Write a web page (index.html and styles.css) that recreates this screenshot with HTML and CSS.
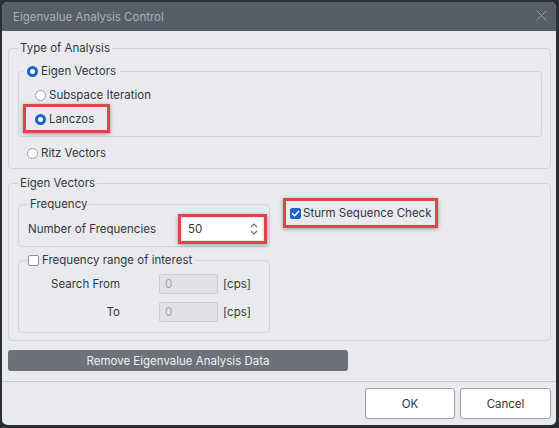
FILE: index.html
```html
<!DOCTYPE html>
<html>
<head>
<meta charset="utf-8">
<link rel="stylesheet" href="styles.css">
</head>
<body>
<div class="dialog">
  <div class="titlebar">
    <span class="title">Eigenvalue Analysis Control</span>
    <svg class="close" width="11" height="11" viewBox="0 0 11 11"><path d="M0.5 0.5 L10.5 10.5 M10.5 0.5 L0.5 10.5" stroke="#989da4" stroke-width="1" fill="none"/></svg>
  </div>
  <div class="content">
    <fieldset class="group type-group">
      <legend>Type of Analysis</legend>
      <fieldset class="group sub-group">
        <legend class="opt"><span class="radio on"></span>Eigen Vectors</legend>
        <div class="opt sub-opt"><span class="radio"></span>Subspace Iteration</div>
        <div class="hl hl-lanczos"><div class="opt"><span class="radio on"></span>Lanczos</div></div>
      </fieldset>
      <div class="opt ritz"><span class="radio"></span>Ritz Vectors</div>
    </fieldset>
    <fieldset class="group eigen-group">
      <legend>Eigen Vectors</legend>
      <div class="eigen-cols">
        <div class="left-col">
          <fieldset class="group freq-group">
            <legend>Frequency</legend>
            <div class="freq-row">
              <span class="freq-label">Number of Frequencies</span>
              <div class="hl hl-spin">
                <div class="spin"><span>50</span>
                  <svg class="arrows" width="8" height="14" viewBox="0 0 8 14"><path d="M1 5 L4 2 L7 5 M1 9 L4 12 L7 9" stroke="#6b6f75" stroke-width="1.1" fill="none"/></svg>
                </div>
              </div>
            </div>
          </fieldset>
          <fieldset class="group range-group">
            <legend class="opt chk-legend"><span class="check"></span>Frequency range of interest</legend>
            <div class="range-grid">
              <span class="rlabel">Search From</span><span class="dinput">0</span><span class="unit">[cps]</span>
              <span class="rlabel">To</span><span class="dinput">0</span><span class="unit">[cps]</span>
            </div>
          </fieldset>
        </div>
        <div class="hl hl-sturm">
          <div class="opt"><span class="check on"><svg width="11" height="11" viewBox="0 0 11 11"><path d="M2.5 5.6 L4.6 7.7 L8.6 3.4" stroke="#fff" stroke-width="1.5" fill="none" stroke-linecap="round" stroke-linejoin="round"/></svg></span>Sturm Sequence Check</div>
        </div>
      </div>
    </fieldset>
    <button class="remove">Remove Eigenvalue Analysis Data</button>
  </div>
  <div class="footer">
    <button class="btn">OK</button>
    <button class="btn btn-cancel">Cancel</button>
  </div>
</div>
</body>
</html>
```
FILE: styles.css
```css
* { box-sizing: border-box; }
html, body { margin: 0; padding: 0; background: #2a2f34; }
body {
  font-family: "Inter", "Noto Sans", sans-serif;
  font-size: 11.5px;
  color: #33373c;
}
.dialog {
  width: 559px;
  height: 428px;
  background: #e9eaee;
  border: 2px solid #2a2f34;
  border-right-width: 3px;
  border-bottom-width: 3px;
  border-radius: 8px;
  overflow: hidden;
  display: flex;
  flex-direction: column;
}
.titlebar {
  height: 29px;
  flex: none;
  background: #575e67;
  display: flex;
  align-items: center;
  justify-content: space-between;
  padding: 0 9px 0 11px;
}
.title {
  color: #aab0b7;
  font-size: 11.5px;
}
.close { display: block; margin-top: -2px; }
.content {
  padding: 9px 5px 10px 6px;
  flex: none;
}
.group {
  margin: 0;
  min-width: 0;
  border: 1px solid #d2d4d8;
  border-radius: 4px;
}
.group > legend {
  padding: 0 2px;
  height: 16px;
  line-height: 16px;
}
.opt {
  display: flex;
  align-items: center;
  gap: 3px;
  height: 20px;
}
legend.opt { height: 16px; }
.radio {
  width: 11px;
  height: 11px;
  border-radius: 50%;
  background: #fff;
  border: 1px solid #9b9ea3;
  flex: none;
}
.radio.on {
  border: 3px solid #1c63c6;
}
.check {
  width: 11px;
  height: 11px;
  border-radius: 2px;
  background: #fff;
  border: 1px solid #8d9096;
  flex: none;
  display: flex;
}
.check.on {
  background: #1e64c4;
  border-color: #1e64c4;
}
.check.on svg { margin: -1px; }
.hl {
  border: 3px solid #d9474b;
  box-shadow: 0 1px 4px rgba(0,0,0,0.35);
  background: #e9eaee;
}
.type-group { padding: 7px 8px 5px 9px; }
.sub-group { padding: 6px 8px 3px 4px; }
.sub-group > legend.opt { padding: 0 4px; }
.sub-opt { margin-left: 12px; }
.hl-lanczos {
  width: fit-content;
  margin-top: -1px;
  padding: 2px 13px 1px 9px;
}
.ritz { margin-top: 6px; margin-left: 9px; }
.eigen-group { margin-top: 6px; padding: 5px 8px 7px 9px; }
.eigen-cols {
  display: flex;
  align-items: flex-start;
  gap: 13px;
}
.left-col { width: 252px; flex: none; }
.freq-group { padding: 2px 2px 2px 9px; }
.freq-row { display: flex; align-items: center; }
.freq-label { width: 150px; flex: none; }
.hl-spin { padding: 1px 2px; }
.spin {
  width: 79px;
  height: 22px;
  background: #fff;
  display: flex;
  align-items: center;
  justify-content: space-between;
  padding: 0 4px 0 5px;
}
.arrows { display: block; }
.range-group { margin-top: 5px; padding: 6px 5px 10px 9px; }
.range-group > legend.chk-legend { padding: 0 3px 0 0; }
.range-grid {
  display: grid;
  grid-template-columns: 92px 98px auto;
  grid-auto-rows: 20px;
  row-gap: 8px;
  align-items: center;
}
.rlabel { text-align: right; }
.dinput {
  margin-left: 39px;
  width: 59px;
  height: 20px;
  background: #e1e2e6;
  border: 1px solid #c9cbcf;
  border-radius: 2px;
  color: #a0a3a8;
  line-height: 18px;
  padding-left: 5px;
}
.unit { margin-left: 5px; }
.hl-sturm {
  margin-top: 2px;
  padding: 3px 4px 3px 4px;
}
.hl-sturm .opt { height: 18px; gap: 2px; }
.remove {
  display: block;
  margin-top: 9px;
  width: 340px;
  height: 21px;
  border: none;
  border-radius: 3px;
  background: #6c717a;
  color: #f1f2f4;
  font-family: inherit;
  font-size: 11.5px;
  padding: 0;
}
.footer {
  flex: 1;
  border-top: 1px solid #c6c8cc;
  display: flex;
  justify-content: flex-end;
  align-items: flex-start;
  gap: 5px;
  padding: 6px 5px 0 0;
}
.btn {
  width: 90px;
  height: 31px;
  background: #fff;
  border: 1px solid #9a9da3;
  border-radius: 3px;
  font-family: inherit;
  font-size: 11.5px;
  color: #33373c;
  padding: 0;
}
.btn-cancel { width: 91px; }
```
